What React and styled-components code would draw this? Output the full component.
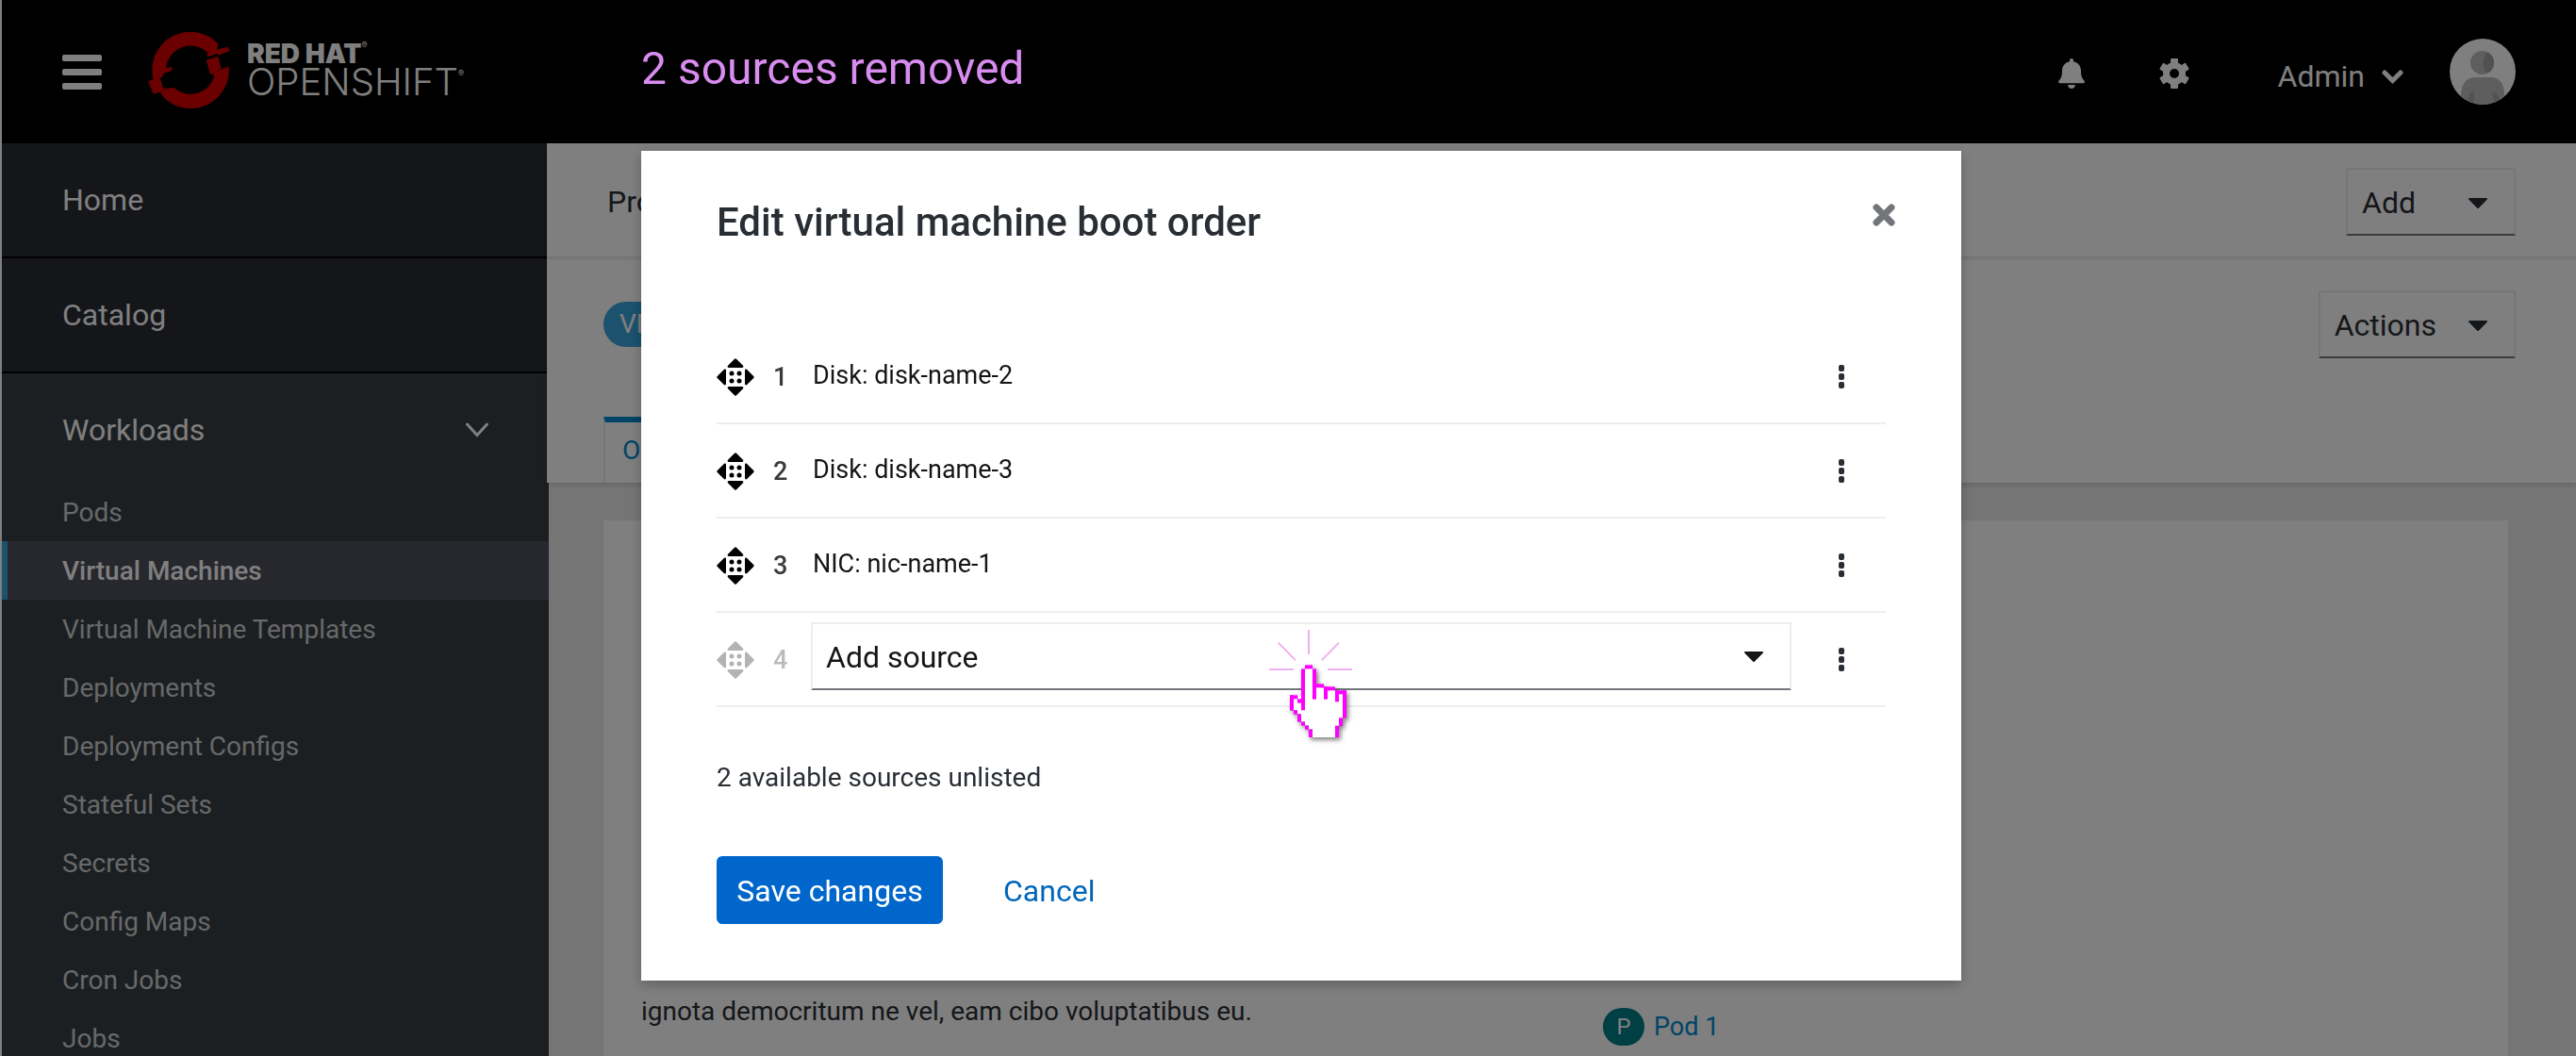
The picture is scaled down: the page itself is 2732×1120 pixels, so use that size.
import React from "react";
import styled, { createGlobalStyle, css } from "styled-components";

const GlobalStyle = createGlobalStyle`
  *, *::before, *::after { box-sizing: border-box; }
  body {
    margin: 0;
    font-family: Roboto, "Liberation Sans", sans-serif;
    font-size: 28px;
    color: #292e34;
    background: #ebebeb;
  }
  button, select { font: inherit; color: inherit; }
  a { text-decoration: none; color: inherit; }
  h1, p, ol, ul { margin: 0; padding: 0; }
  ol, ul { list-style: none; }
  svg { display: block; flex: none; }
`;

/* ---------- page shell ---------- */

const Page = styled.div`
  height: 100vh;
  overflow: hidden;
  display: flex;
  flex-direction: column;
  border-left: 2px solid #fff;
`;

const Masthead = styled.header`
  flex: none;
  height: 152px;
  padding: 0 64px;
  display: flex;
  align-items: center;
  background: #000;
  color: #fff;
`;

const IconButton = styled.button`
  display: flex;
  align-items: center;
  justify-content: center;
  padding: 0;
  border: 0;
  background: none;
  cursor: pointer;
`;

const Brand = styled.a`
  display: flex;
  align-items: center;
  gap: 18px;
  margin-left: 49px;
  padding-bottom: 4px;
`;

const Wordmark = styled.span`
  display: flex;
  flex-direction: column;
  padding-bottom: 4px;
  font-family: Inter, sans-serif;
  line-height: 30px;
`;

const WordTop = styled.span`
  font-size: 28px;
  font-weight: 900;
`;

const WordBottom = styled.span`
  font-size: 40px;
  font-weight: 300;
`;

const Registered = styled.small`
  font-size: 9px;
  font-weight: 400;
  line-height: 12px;
  vertical-align: top;
`;

const Tools = styled.div`
  margin-left: auto;
  display: flex;
  align-items: center;
`;

const ToolIcons = styled.div`
  display: flex;
  gap: 79px;
  padding-top: 4px;
`;

const UserMenu = styled(IconButton)`
  gap: 18px;
  margin: 0 49px 0 94px;
  padding-top: 10px;
  font-size: 32px;
  line-height: 40px;
`;

const Body = styled.div`
  flex: 1;
  min-height: 0;
  display: flex;
`;

/* ---------- sidebar ---------- */

const Sidebar = styled.nav`
  flex: none;
  width: 580px;
  background: #383e44;
  color: #fff;
`;

const sectionText = css`
  padding: 0 64px;
  display: flex;
  align-items: center;
  justify-content: space-between;
  font-size: 32px;
`;

const SectionLink = styled.a`
  ${sectionText}
  width: 578px;
  height: 122px;
  background: #2a2c32;
  border-bottom: 2px solid #000;
`;

const SectionToggle = styled.button`
  ${sectionText}
  width: 100%;
  height: 116px;
  padding-top: 4px;
  border: 0;
  background: none;
  cursor: pointer;
`;

const SubLink = styled.a`
  display: flex;
  align-items: center;
  height: 62px;
  padding-left: ${(p) => (p.$current ? 58 : 64)}px;
  border-left: ${(p) => (p.$current ? "6px solid #39a5dc" : "0")};
  background: ${(p) => (p.$current ? "#4e505a" : "transparent")};
  color: ${(p) => (p.$current ? "#fff" : "#d1d1d1")};
  font-weight: ${(p) => (p.$current ? 500 : 400)};
`;

/* ---------- main area ---------- */

const Main = styled.main`
  flex: 1;
  min-width: 0;
`;

const TopSections = styled.div`
  position: relative;
  margin-left: -2px;
  background: #fff;
  box-shadow: 0 2px 6px rgba(0, 0, 0, 0.16);
`;

const ProjectBar = styled.div`
  height: 120px;
  padding: 4px 64px 0;
  display: flex;
  align-items: center;
  justify-content: space-between;
  font-size: 32px;
  box-shadow: 0 2px 4px rgba(0, 0, 0, 0.14);
`;

const ResourceBar = styled.div`
  padding: 36px 64px 0 60px;
`;

const ResourceTitle = styled.div`
  display: flex;
  align-items: center;
  justify-content: space-between;
`;

const KindBadge = styled.span`
  height: 48px;
  padding: 0 17px;
  border-radius: 24px;
  background: #39a5dc;
  color: #fff;
  line-height: 48px;
`;

const DropdownButton = styled.button`
  min-width: 180px;
  height: 72px;
  padding: 2px 28px 0 15px;
  display: flex;
  align-items: center;
  justify-content: space-between;
  gap: 34px;
  font-size: 32px;
  background: #fff;
  border: 2px solid #ededed;
  border-bottom-color: #72767b;
  cursor: pointer;
`;

const Tabs = styled.div`
  display: flex;
  margin-top: 62px;
`;

const Tab = styled.a`
  height: 70px;
  padding: 0 18px 6px;
  display: flex;
  align-items: center;
  border: 2px solid #ededed;
  border-top: 6px solid #0088ce;
  border-bottom: 0;
  color: #0088ce;
`;

const Card = styled.section`
  margin: 40px 72px 0 58px;
  min-height: 640px;
  padding: 500px 40px 0;
  display: grid;
  grid-template-columns: 51fr 46fr;
  background: #fff;
  line-height: 42px;
`;

const PodLink = styled.a`
  display: flex;
  align-items: center;
  gap: 10px;
  padding-top: 16px;
  color: #0088ce;
  font-size: 27px;
`;

const PodBadge = styled.span`
  width: 44px;
  height: 40px;
  border-radius: 20px;
  background: #007e88;
  color: #fff;
  font-size: 24px;
  line-height: 40px;
  text-align: center;
`;

/* ---------- modal ---------- */

const Backdrop = styled.div`
  position: fixed;
  inset: 0;
  padding-left: 28px;
  display: flex;
  flex-direction: column;
  align-items: center;
  background: rgba(0, 0, 0, 0.5);
`;

const StepCaption = styled.p`
  width: 100%;
  max-width: 1400px;
  height: 144px;
  margin-bottom: 16px;
  display: flex;
  align-items: center;
  font-size: 48px;
  color: #d98cf0;
`;

const Dialog = styled.section`
  width: 100%;
  max-width: 1400px;
  padding: 52px 80px 60px;
  background: #fff;
  box-shadow: 0 4px 12px rgba(0, 0, 0, 0.25);
`;

const DialogHeader = styled.div`
  display: flex;
  justify-content: space-between;
  align-items: flex-start;
  margin: 0 -10px 90px 0;
`;

const DialogTitle = styled.h1`
  font-size: 42px;
  font-weight: 500;
  line-height: 48px;
`;

const CloseButton = styled(IconButton)`
  width: 24px;
  height: 32px;
`;

const Row = styled.li`
  display: flex;
  align-items: center;
  height: 100px;
  padding-top: 2px;
  border-bottom: 2px solid #ededed;
`;

const Handle = styled(IconButton)`
  cursor: grab;
  color: ${(p) => (p.disabled ? "#b3b3b3" : "#000")};
`;

const Position = styled.span`
  width: 40px;
  margin-left: 20px;
  font-size: 27px;
  font-weight: 500;
  color: ${(p) => (p.$muted ? "#bbb" : "#393939")};
`;

const SourceName = styled.span`
  flex: 1;
  padding: 0 0 4px 2px;
  font-size: 27px;
  color: #151515;
`;

const SelectField = styled.div`
  position: relative;
  flex: 1;
  display: grid;
  align-items: center;
  margin-bottom: 8px;
  color: #151515;
  > * { grid-area: 1 / 1; }
  > svg:nth-of-type(1) { justify-self: end; margin-right: 30px; pointer-events: none; }
`;

const Select = styled.select`
  width: 100%;
  height: 72px;
  padding: 2px 14px 0;
  appearance: none;
  font-size: 32px;
  background: #fff;
  border: 2px solid #ededed;
  border-bottom-color: #72767b;
  border-radius: 0;
`;

const Kebab = styled(IconButton)`
  width: 26px;
  height: 40px;
  margin: 0 34px 0 40px;
  color: #292e34;
`;

const Hint = styled.p`
  margin: 56px 0 64px;
  line-height: 38px;
`;

const DialogActions = styled.div`
  display: flex;
  align-items: center;
  gap: 64px;
`;

const PrimaryButton = styled.button`
  min-width: 240px;
  height: 72px;
  padding: 2px 20px 0;
  border: 0;
  border-radius: 6px;
  background: #06c;
  color: #fff;
  font-size: 32px;
  cursor: pointer;
`;

const LinkButton = styled(IconButton)`
  height: 72px;
  padding-top: 2px;
  color: #0066bb;
  font-size: 32px;
`;

const Pointer = styled.svg`
  position: absolute;
  left: 486px;
  top: 8px;
  overflow: visible;
  pointer-events: none;
`;

const PointerHand = styled.g`
  filter: drop-shadow(6px 8px 8px rgba(0, 0, 0, 0.5));
`;

/* ---------- drawings ---------- */

const CaretDown = () => (
  <svg width="20" height="11" viewBox="0 0 20 11" fill="currentColor" aria-hidden="true">
    <path d="M1 0h18c1 0 1.300 1 .600 1.800L11 10.400c-.600.700-1.400.700-2 0L.400 1.800C-.300 1 0 0 1 0z" />
  </svg>
);

const MenuIcon = () => (
  <svg width="42" height="37" viewBox="0 0 42 37" fill="#fff" aria-hidden="true">
    <rect y="0" width="42" height="7" rx="2" />
    <rect y="15" width="42" height="7" rx="2" />
    <rect y="30" width="42" height="7" rx="2" />
  </svg>
);

const OpenShiftMark = () => (
  <svg width="87" height="82" viewBox="24 26 262 246" fill="#d40000" aria-hidden="true">
    <path d="M38 164A122 122 0 0 1 248 66L244 84L279 76L285 89L249 103L246 97L214 108L212 98L216 96A78 78 0 0 0 82 143L102 140L99 152L72 162L70 172L40 182Z" />
    <path d="M282 140A122 122 0 0 1 74 237L62 220L42 227L24 186L62 172L72 208L108 207A78 78 0 0 0 236 166L222 162L210 118L248 106L258 148Z" />
    <path d="M222 162L258 148L282 140M62 220L82 211L108 207" fill="none" stroke="#a00000" strokeWidth="3" />
  </svg>
);

const BellIcon = () => (
  <svg width="28" height="32" viewBox="0 0 28 32" fill="#fff" aria-hidden="true">
    <path d="M14 0c1.200 0 2 .900 2 2v1.200c5 1 8 5 8 9.800 0 5.500 1 8 3.400 10.400.900 1 .600 2.800-1 2.800H1.600c-1.600 0-1.900-1.800-1-2.800C3 21 4 18.500 4 13c0-4.800 3-8.800 8-9.800V2c0-1.100.800-2 2-2z" />
    <path d="M10 28h8c0 2.300-1.800 4-4 4s-4-1.700-4-4z" />
  </svg>
);

const GearIcon = () => {
  const teeth = [0, 60, 120, 180, 240, 300];
  return (
    <svg width="32" height="32" viewBox="0 0 32 32" aria-hidden="true">
      <g fill="#fff">
        {teeth.map((angle) => (
          <rect key={angle} x="12" y="0" width="8" height="9" rx="1" transform={`rotate(${angle} 16 16)`} />
        ))}
      </g>
      <circle cx="16" cy="16" r="8.500" fill="none" stroke="#fff" strokeWidth="7" />
    </svg>
  );
};

const UserChevron = () => (
  <svg width="23" height="15" viewBox="0 0 23 15" fill="none" stroke="#fff" strokeWidth="5" strokeLinecap="round" aria-hidden="true">
    <path d="M3 3l8.500 8.500L20 3" />
  </svg>
);

const SectionChevron = () => (
  <svg width="24" height="16" viewBox="0 0 24 16" fill="none" stroke="#fff" strokeWidth="3" strokeLinecap="round" aria-hidden="true">
    <path d="M1.500 2L12 13.500 22.500 2" />
  </svg>
);

const Avatar = () => (
  <svg width="70" height="70" viewBox="0 0 70 70" role="img" aria-label="Admin avatar">
    <clipPath id="avatar-clip"><circle cx="35" cy="35" r="35" /></clipPath>
    <g clipPath="url(#avatar-clip)">
      <rect width="70" height="70" fill="#fff" />
      <path d="M12 70V60c0-12 6-19 15-19h17c9 0 14 7 14 19v10z" fill="#bcbcbc" />
      <path d="M20 70V60l4-4h2v14zM45 57c5 0 8 3 8 8l-5 5z" fill="#a6a6a6" />
      <circle cx="34.500" cy="25.500" r="12.500" fill="#bcbcbc" />
      <path d="M40 14.300a12.500 12.500 0 0 1 0 22.400c-6-5-6-17 0-22.400z" fill="#a3a3a3" />
    </g>
  </svg>
);

const CloseIcon = () => (
  <svg width="24" height="24" viewBox="0 0 24 24" stroke="#72767b" strokeWidth="7" strokeLinecap="round" aria-hidden="true">
    <path d="M4 4l16 16M20 4L4 20" />
  </svg>
);

const MoveIcon = () => (
  <svg width="40" height="40" viewBox="0 0 40 40" fill="currentColor" aria-hidden="true">
    {[0, 90, 180, 270].map((angle) => (
      <path key={angle} d="M19 .800c.600-.700 1.400-.700 2 0l7 7c.800 1.200.300 2.200-1 2.200H13c-1.300 0-1.800-1-1-2.200z" transform={`rotate(${angle} 20 20)`} />
    ))}
    <circle cx="16" cy="16" r="2.500" />
    <circle cx="24" cy="16" r="2.500" />
    <circle cx="16" cy="24" r="2.500" />
    <circle cx="24" cy="24" r="2.500" />
  </svg>
);

const KebabIcon = () => (
  <svg width="6" height="26" viewBox="0 0 6 26" fill="currentColor" aria-hidden="true">
    <rect y="0" width="6" height="7" rx="2" />
    <rect y="9" width="6" height="7" rx="2" />
    <rect y="18" width="6" height="7" rx="2" />
  </svg>
);

const handOutline = [
  [252, 196, 24, 12], [240, 208, 12, 132], [276, 208, 12, 97], [288, 256, 24, 12],
  [312, 265, 36, 12], [312, 265, 12, 40], [348, 277, 36, 12], [348, 277, 12, 36],
  [372, 277, 12, 88], [360, 364, 12, 26], [348, 389, 12, 37], [204, 292, 25, 12],
  [204, 292, 12, 49], [228, 304, 12, 13], [216, 340, 12, 13], [228, 352, 12, 25],
  [240, 377, 12, 12], [252, 389, 12, 12], [264, 401, 12, 25],
];

const ClickPointer = () => (
  <Pointer width="88" height="114" viewBox="138 84 264 342" aria-hidden="true">
    <path d="M264 84v78M167 125l55 56M360 125l-55 56M138 210h78M324 210h78" stroke="#efb0ef" strokeWidth="6" />
    <PointerHand>
      <path d="M252 200h24v8h12v52h24v10h36v12h36v82h-12v26h-12v36h-84v-26h-12v-12h-12v-12h-12v-24h-12v-12h-12v-48h24v12h12V208h12z" fill="#fff" />
      {handOutline.map(([x, y, w, h]) => (
        <rect key={`${x}-${y}-${w}`} x={x} y={y} width={w} height={h} fill="#ff00ff" />
      ))}
    </PointerHand>
  </Pointer>
);

/* ---------- content ---------- */

const workloads = [
  "Pods", "Virtual Machines", "Virtual Machine Templates", "Deployments",
  "Deployment Configs", "Stateful Sets", "Secrets", "Config Maps", "Cron Jobs", "Jobs",
];

const bootSources = ["Disk: disk-name-2", "Disk: disk-name-3", "NIC: nic-name-1"];

function Dropdown({ label }) {
  return (
    <DropdownButton type="button" aria-haspopup="menu">
      {label}
      <CaretDown />
    </DropdownButton>
  );
}

function BootRow({ position, muted, children }) {
  return (
    <Row>
      <Handle type="button" disabled={muted} aria-label={`Move source ${position}`}><MoveIcon /></Handle>
      <Position $muted={muted}>{position}</Position>
      {children}
      <Kebab type="button" aria-label={`Source ${position} actions`}><KebabIcon /></Kebab>
    </Row>
  );
}

export default function App() {
  return (
    <>
      <GlobalStyle />
      <Page>
        <Masthead>
          <IconButton type="button" aria-label="Toggle navigation"><MenuIcon /></IconButton>
          <Brand href="#home">
            <OpenShiftMark />
            <Wordmark>
              <WordTop>RED HAT<Registered>®</Registered></WordTop>
              <WordBottom>OPENSHIFT<Registered>®</Registered></WordBottom>
            </Wordmark>
          </Brand>
          <Tools>
            <ToolIcons>
              <IconButton type="button" aria-label="Notifications"><BellIcon /></IconButton>
              <IconButton type="button" aria-label="Settings"><GearIcon /></IconButton>
            </ToolIcons>
            <UserMenu type="button">Admin<UserChevron /></UserMenu>
            <Avatar />
          </Tools>
        </Masthead>
        <Body>
          <Sidebar aria-label="Main">
            <SectionLink href="#home">Home</SectionLink>
            <SectionLink href="#catalog">Catalog</SectionLink>
            <SectionToggle type="button" aria-expanded="true">Workloads<SectionChevron /></SectionToggle>
            <ul>
              {workloads.map((name) => (
                <li key={name}>
                  <SubLink href="#workloads" $current={name === "Virtual Machines"}>{name}</SubLink>
                </li>
              ))}
            </ul>
          </Sidebar>
          <Main>
            <TopSections>
              <ProjectBar>
                <span>Project</span>
                <Dropdown label="Add" />
              </ProjectBar>
              <ResourceBar>
                <ResourceTitle>
                  <KindBadge>VM</KindBadge>
                  <Dropdown label="Actions" />
                </ResourceTitle>
                <Tabs><Tab href="#overview">Overview</Tab></Tabs>
              </ResourceBar>
            </TopSections>
            <Card>
              <p>ignota democritum ne vel, eam cibo voluptatibus eu.</p>
              <div>
                <PodLink href="#pod-1"><PodBadge>P</PodBadge>Pod 1</PodLink>
              </div>
            </Card>
          </Main>
        </Body>
      </Page>

      <Backdrop>
        <StepCaption>2 sources removed</StepCaption>
        <Dialog role="dialog" aria-modal="true" aria-labelledby="boot-order-title">
          <DialogHeader>
            <DialogTitle id="boot-order-title">Edit virtual machine boot order</DialogTitle>
            <CloseButton type="button" aria-label="Close"><CloseIcon /></CloseButton>
          </DialogHeader>
          <ol>
            {bootSources.map((name, i) => (
              <BootRow key={name} position={i + 1}><SourceName>{name}</SourceName></BootRow>
            ))}
            <BootRow position={4} muted>
              <SelectField>
                <Select aria-label="Add source" defaultValue="add">
                  <option value="add">Add source</option>
                </Select>
                <CaretDown />
                <ClickPointer />
              </SelectField>
            </BootRow>
          </ol>
          <Hint>2 available sources unlisted</Hint>
          <DialogActions>
            <PrimaryButton type="button">Save changes</PrimaryButton>
            <LinkButton type="button">Cancel</LinkButton>
          </DialogActions>
        </Dialog>
      </Backdrop>
    </>
  );
}
